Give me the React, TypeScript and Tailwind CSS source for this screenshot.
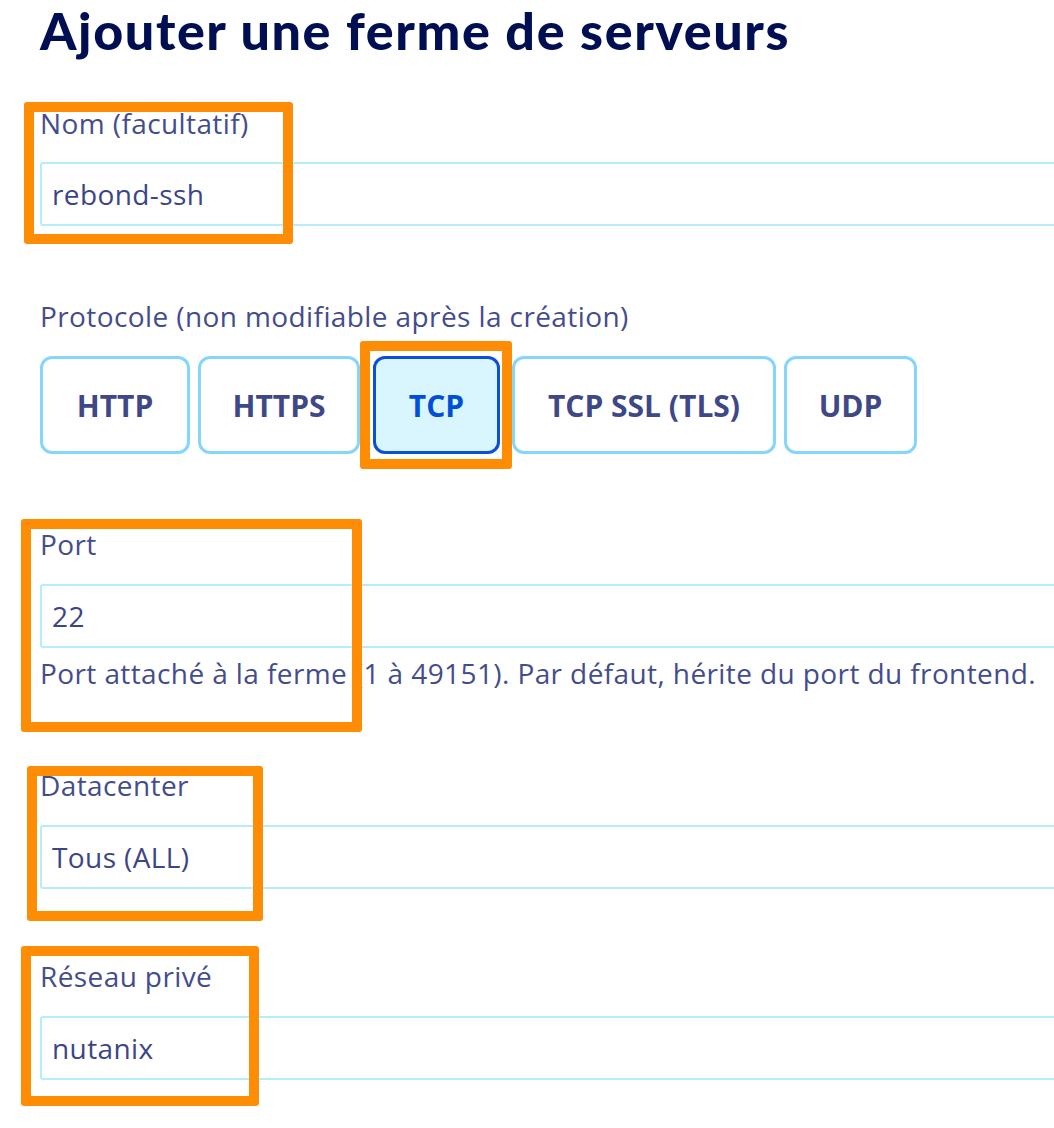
import React from 'react';

const protocols = [
  { label: 'HTTP', cls: 'w-[150px]' },
  { label: 'HTTPS', cls: 'w-[162px] ml-[8px]' },
  { label: 'TCP', cls: 'w-[127px] ml-[13px]', active: true },
  { label: 'TCP SSL (TLS)', cls: 'w-[264px] ml-[12px]' },
  { label: 'UDP', cls: 'w-[133px] ml-[8px]' },
];

const Label: React.FC<{ children: React.ReactNode }> = ({ children }) => (
  <div className="h-[36px] pb-[4px] flex items-center text-[28px] tracking-[0.4px] text-[#444d8c] whitespace-nowrap">{children}</div>
);

const Field: React.FC<{ value: string }> = ({ value }) => (
  <div className="h-[64px] w-full border-2 border-r-0 border-[#b5edfb] rounded-l-[3px] flex items-center pl-[10px] text-[28px] tracking-[0.4px] text-[#3c4686]">
    {value}
  </div>
);

// annotation boxes drawn over the form
const Marker: React.FC<{ className: string }> = ({ className }) => (
  <div className={`absolute border-[10px] border-[#ff8c05] rounded-[3px] pointer-events-none ${className}`} />
);

export default function App() {
  return (
    <div className="relative w-[1054px] h-[1128px] bg-white overflow-hidden pl-[40px]" style={{ fontFamily: '"Open Sans", Lato, sans-serif' }}>
      <h1
        className="text-[52px] leading-[60px] font-black text-[#000e52] tracking-[1.6px]"
        style={{ fontFamily: 'Lato, "Open Sans", sans-serif' }}
      >
        Ajouter une ferme de serveurs
      </h1>

      <div className="mt-[47px]">
        <Label>Nom (facultatif)</Label>
        <div className="mt-[19px]"><Field value="rebond-ssh" /></div>
      </div>

      <div className="mt-[74px]">
        <Label>Protocole (non modifiable après la création)</Label>
        <div className="mt-[20px] flex">
          {protocols.map(p => (
            <div
              key={p.label}
              className={`${p.cls} shrink-0 h-[98px] rounded-[12px] border-[3px] flex items-center justify-center text-[30px] font-bold ${
                p.active ? 'border-[#0b50d6] bg-[#d9f6fe] text-[#0050d7]' : 'border-[#84d6fb] text-[#3f4886]'
              }`}
            >
              {p.label}
            </div>
          ))}
        </div>
      </div>

      <div className="mt-[74px]">
        <Label>Port</Label>
        <div className="mt-[20px]"><Field value="22" /></div>
        <div className="mt-[9px]">
          <Label>Port attaché à la ferme (1 à 49151). Par défaut, hérite du port du frontend.</Label>
        </div>
      </div>

      <div className="mt-[76px]">
        <Label>Datacenter</Label>
        <div className="mt-[20px]"><Field value="Tous (ALL)" /></div>
      </div>

      <div className="mt-[71px]">
        <Label>Réseau privé</Label>
        <div className="mt-[20px]"><Field value="nutanix" /></div>
      </div>

      <Marker className="left-[24px] top-[102px] w-[269px] h-[142px]" />
      <Marker className="left-[360px] top-[341px] w-[152px] h-[128px]" />
      <Marker className="left-[21px] top-[519px] w-[341px] h-[213px]" />
      <Marker className="left-[27px] top-[766px] w-[236px] h-[155px]" />
      <Marker className="left-[21px] top-[946px] w-[238px] h-[160px]" />
    </div>
  );
}
